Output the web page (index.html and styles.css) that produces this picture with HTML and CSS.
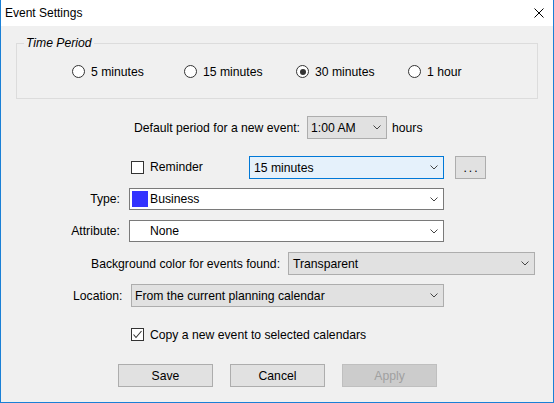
FILE: index.html
```html
<!DOCTYPE html>
<html>
<head>
<meta charset="utf-8">
<title>Event Settings</title>
<link rel="stylesheet" href="styles.css">
</head>
<body>
<div class="window">
  <div class="titlebar">
    <span class="title">Event Settings</span>
    <svg class="close" width="10" height="10" viewBox="0 0 10 10"><path d="M0.5 0.5 L9.5 9.5 M9.5 0.5 L0.5 9.5" stroke="#000" stroke-width="1" fill="none"/></svg>
  </div>
  <div class="body">
    <div class="group">
      <span class="legend">Time Period</span>
      <div class="radios">
        <div class="radio"><span class="rcircle"></span><span>5 minutes</span></div>
        <div class="radio"><span class="rcircle"></span><span>15 minutes</span></div>
        <div class="radio"><span class="rcircle checked"></span><span>30 minutes</span></div>
        <div class="radio"><span class="rcircle"></span><span>1 hour</span></div>
      </div>
    </div>

    <div class="row row-default">
      <span class="lbl">Default period for a new event:</span>
      <div class="sel sel-gray sel-time"><span>1:00 AM</span><svg class="chev" width="8" height="5" viewBox="0 0 8 5"><polyline points="0.5,0.5 4,4 7.5,0.5" fill="none" stroke="#444" stroke-width="1"/></svg></div>
      <span class="hours">hours</span>
    </div>

    <div class="row row-reminder">
      <div class="check-wrap"><span class="cbox"></span><span class="rem-text">Reminder</span></div>
      <div class="sel sel-focus sel-remind"><span>15 minutes</span><svg class="chev" width="8" height="5" viewBox="0 0 8 5"><polyline points="0.5,0.5 4,4 7.5,0.5" fill="none" stroke="#444" stroke-width="1"/></svg></div>
      <div class="btn btn-dots">...</div>
    </div>

    <div class="row row-field">
      <span class="flabel">Type:</span>
      <div class="sel sel-white sel-wide"><span class="val"><span class="swatch"></span>Business</span><svg class="chev" width="8" height="5" viewBox="0 0 8 5"><polyline points="0.5,0.5 4,4 7.5,0.5" fill="none" stroke="#444" stroke-width="1"/></svg></div>
    </div>

    <div class="row row-field row-attr">
      <span class="flabel">Attribute:</span>
      <div class="sel sel-white sel-wide"><span class="val"><span class="swatch empty"></span>None</span><svg class="chev" width="8" height="5" viewBox="0 0 8 5"><polyline points="0.5,0.5 4,4 7.5,0.5" fill="none" stroke="#444" stroke-width="1"/></svg></div>
    </div>

    <div class="row row-bg">
      <span class="bglabel">Background color for events found:</span>
      <div class="sel sel-gray sel-bg"><span>Transparent</span><svg class="chev" width="8" height="5" viewBox="0 0 8 5"><polyline points="0.5,0.5 4,4 7.5,0.5" fill="none" stroke="#444" stroke-width="1"/></svg></div>
    </div>

    <div class="row row-loc">
      <span class="loclabel">Location:</span>
      <div class="sel sel-gray sel-loc"><span>From the current planning calendar</span><svg class="chev" width="8" height="5" viewBox="0 0 8 5"><polyline points="0.5,0.5 4,4 7.5,0.5" fill="none" stroke="#444" stroke-width="1"/></svg></div>
    </div>

    <div class="row row-copy">
      <span class="cbox"><svg width="11" height="11" viewBox="0 0 11 11"><polyline points="1.5,5.5 4,8.5 9.5,2" fill="none" stroke="#333" stroke-width="1.1"/></svg></span>
      <span>Copy a new event to selected calendars</span>
    </div>

    <div class="row row-buttons">
      <div class="btn btn-main">Save</div>
      <div class="btn btn-main">Cancel</div>
      <div class="btn btn-main btn-disabled">Apply</div>
    </div>
  </div>
</div>
</body>
</html>
```

FILE: styles.css
```css
* { box-sizing: border-box; }

body {
  margin: 0;
  font-family: "Liberation Sans", Arial, sans-serif;
  font-size: 12.2px;
  color: #000;
  background: #f0f0f0;
}

.window {
  width: 554px;
  height: 403px;
  border: 1px solid #1a80d6;
  border-top: 0;
  background: #f0f0f0;
  display: flex;
  flex-direction: column;
}

.titlebar {
  height: 26px;
  background: #fff;
  display: flex;
  align-items: center;
  justify-content: space-between;
  padding: 0 9px 0 4px;
  flex: none;
}

.title { font-size: 12px; }

.close { display: block; }

.body {
  display: flex;
  flex-direction: column;
  flex: 1;
}

.group {
  position: relative;
  margin: 17px 15px 0 15px;
  height: 56px;
  border: 1px solid #dcdcdc;
}

.legend {
  position: absolute;
  top: -8px;
  left: 7px;
  padding: 0 2px;
  line-height: 14px;
  background: #f0f0f0;
  font-style: italic;
}

.radios {
  display: flex;
  padding: 20px 0 0 55px;
}

.radio {
  width: 112px;
  height: 15px;
  display: flex;
  align-items: center;
  gap: 6px;
}

.rcircle {
  width: 13px;
  height: 13px;
  border: 1px solid #333;
  border-radius: 50%;
  background: #fff;
  display: flex;
  align-items: center;
  justify-content: center;
  flex: none;
}

.rcircle.checked::after {
  content: "";
  width: 6px;
  height: 6px;
  border-radius: 50%;
  background: #333;
}

.row {
  display: flex;
  align-items: center;
}

.sel {
  display: flex;
  align-items: center;
  justify-content: space-between;
  border: 1px solid #adadad;
  padding: 0 5px 0 3px;
  white-space: nowrap;
}

.sel-gray { background: #e1e1e1; border-color: #adadad; }
.sel-white { background: #fff; border-color: #7a7a7a; }
.sel-focus { background: #e5f1fb; border-color: #0078d7; }

.chev { display: block; flex: none; }

.row-default {
  margin: 17px 0 0 133px;
  height: 23px;
}

.lbl {
  width: 165px;
  white-space: nowrap;
}

.sel-time {
  width: 80px;
  height: 23px;
  margin-left: 8px;
}

.hours { margin-left: 5px; }

.row-reminder {
  margin: 17px 0 0 130px;
  height: 23px;
}

.check-wrap {
  width: 118px;
  display: flex;
  align-items: center;
  gap: 6px;
}

.rem-text { position: relative; top: -1px; }

.cbox {
  width: 13px;
  height: 13px;
  border: 1px solid #333;
  background: #fff;
  display: flex;
  align-items: center;
  justify-content: center;
  flex: none;
}

.cbox svg { display: block; }

.sel-remind {
  width: 195px;
  height: 23px;
  padding-left: 4px;
}

.btn {
  display: flex;
  align-items: center;
  justify-content: center;
  background: #e1e1e1;
  border: 1px solid #adadad;
}

.btn-dots {
  width: 31px;
  height: 23px;
  margin-left: 11px;
  letter-spacing: 2px;
  padding-left: 2px;
}

.row-field {
  margin-top: 9px;
  height: 22px;
}

.row-attr { margin-top: 10px; }

.flabel {
  width: 119px;
  text-align: right;
  margin-right: 9px;
}

.sel-wide {
  width: 315px;
  height: 22px;
  padding-left: 2px;
}

.val {
  display: flex;
  align-items: center;
  gap: 2px;
}

.swatch {
  width: 16px;
  height: 16px;
  background: #3434ff;
}

.swatch.empty { background: transparent; }

.row-bg {
  margin: 10px 0 0 90px;
  height: 23px;
}

.bglabel {
  width: 197px;
  white-space: nowrap;
}

.sel-bg {
  width: 247px;
  height: 23px;
  padding-left: 4px;
}

.row-loc {
  margin: 9px 0 0 72px;
  height: 23px;
}

.loclabel { width: 58px; }

.sel-loc {
  width: 313px;
  height: 23px;
}

.row-copy {
  margin: 20px 0 0 130px;
  height: 15px;
  gap: 6px;
}

.row-buttons {
  margin: 22px 0 0 117px;
  gap: 17px;
}

.btn-main {
  width: 95px;
  height: 23px;
}

.btn-disabled {
  background: #cccccc;
  border-color: #bfbfbf;
  color: #a0a0a0;
}
```
